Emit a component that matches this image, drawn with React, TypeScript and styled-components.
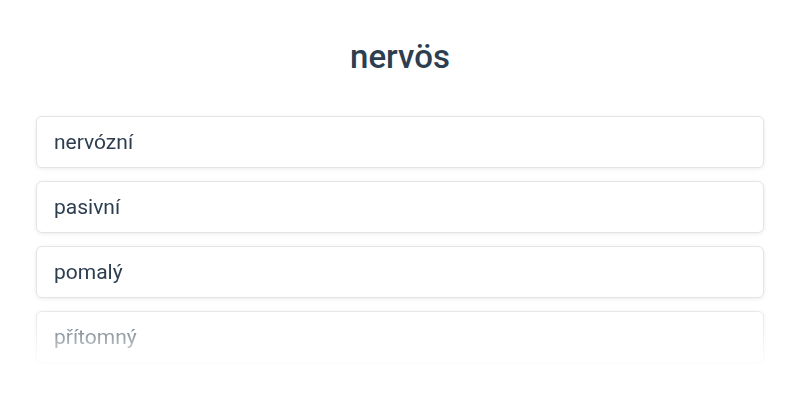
import React from "react";
import styled, { createGlobalStyle } from "styled-components";

const Global = createGlobalStyle`
  html, body { margin: 0; padding: 0; background: #ffffff; }
  body { font-family: Roboto, "Noto Sans", sans-serif; color: #2c3e50; }
`;

const Page = styled.div`
  width: 800px;
  height: 400px;
  box-sizing: border-box;
  padding: 36px 33px 0;
  display: flex;
  flex-direction: column;
`;

const Title = styled.h1`
  margin: 0;
  text-align: center;
  font-size: 33px;
  line-height: 42px;
  font-weight: 500;
  color: #2c3e50;
`;

const List = styled.div`
  margin-top: 35px;
  height: 254px;
  padding: 3px 3px 0;
  overflow: hidden;
  display: flex;
  flex-direction: column;
  gap: 13px;
  -webkit-mask-image: linear-gradient(to bottom, #000 calc(100% - 68px), transparent 100%);
  mask-image: linear-gradient(to bottom, #000 calc(100% - 68px), transparent 100%);
`;

const Option = styled.div`
  flex: none;
  box-sizing: border-box;
  height: 52px;
  display: flex;
  align-items: center;
  padding: 0 17px;
  border: 1px solid #e2e4e7;
  border-radius: 6px;
  background: #ffffff;
  box-shadow: 0 1px 4px rgba(0, 0, 0, 0.08);
  font-size: 21px;
  color: #2c3e50;
`;

const options = ["nervózní", "pasivní", "pomalý", "přítomný"];

export default function App() {
  return (
    <>
      <Global />
      <Page>
        <Title>nervös</Title>
        <List>
          {options.map((o) => (
            <Option key={o}>{o}</Option>
          ))}
        </List>
      </Page>
    </>
  );
}
